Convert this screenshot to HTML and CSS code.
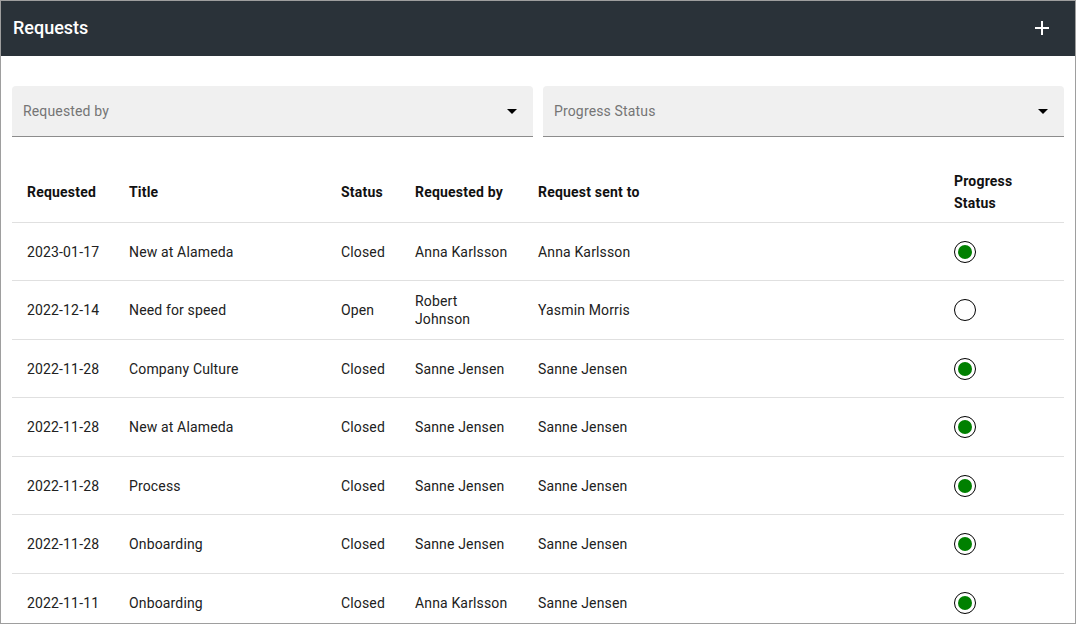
FILE: index.html
```html
<!DOCTYPE html>
<html>
<head>
<meta charset="utf-8">
<link rel="stylesheet" href="styles.css">
</head>
<body>
<div class="frame">
  <header class="topbar">
    <h1 class="title">Requests</h1>
    <svg class="add" width="14" height="14" viewBox="0 0 14 14"><path d="M7 0v14M0 7h14" stroke="#fff" stroke-width="2"/></svg>
  </header>
  <main class="content">
    <div class="filters">
      <div class="select"><span class="label">Requested by</span><span class="arrow"></span></div>
      <div class="select"><span class="label">Progress Status</span><span class="arrow"></span></div>
    </div>
    <table class="grid">
      <colgroup>
        <col style="width:102px"><col style="width:212px"><col style="width:74px"><col style="width:123px"><col style="width:416px"><col style="width:125px">
      </colgroup>
      <thead>
        <tr><th>Requested</th><th>Title</th><th>Status</th><th>Requested by</th><th>Request sent to</th><th>Progress<br>Status</th></tr>
      </thead>
      <tbody>
        <tr><td>2023-01-17</td><td>New at Alameda</td><td>Closed</td><td>Anna Karlsson</td><td>Anna Karlsson</td><td><span class="radio on"></span></td></tr>
        <tr><td>2022-12-14</td><td>Need for speed</td><td>Open</td><td class="wrap">Robert<br>Johnson</td><td>Yasmin Morris</td><td><span class="radio"></span></td></tr>
        <tr><td>2022-11-28</td><td>Company Culture</td><td>Closed</td><td>Sanne Jensen</td><td>Sanne Jensen</td><td><span class="radio on"></span></td></tr>
        <tr><td>2022-11-28</td><td>New at Alameda</td><td>Closed</td><td>Sanne Jensen</td><td>Sanne Jensen</td><td><span class="radio on"></span></td></tr>
        <tr><td>2022-11-28</td><td>Process</td><td>Closed</td><td>Sanne Jensen</td><td>Sanne Jensen</td><td><span class="radio on"></span></td></tr>
        <tr><td>2022-11-28</td><td>Onboarding</td><td>Closed</td><td>Sanne Jensen</td><td>Sanne Jensen</td><td><span class="radio on"></span></td></tr>
        <tr><td>2022-11-11</td><td>Onboarding</td><td>Closed</td><td>Anna Karlsson</td><td>Sanne Jensen</td><td><span class="radio on"></span></td></tr>
      </tbody>
    </table>
  </main>
</div>
</body>
</html>
```
FILE: styles.css
```css
html, body { margin: 0; padding: 0; }
body { font-family: Roboto, "Liberation Sans", sans-serif; color: #212121; background: #fff; }
.frame {
  width: 1076px; height: 624px; box-sizing: border-box;
  border: 1px solid #9e9e9e; overflow: hidden; background: #fff;
}
.topbar {
  height: 55px; background: #2a3239; display: flex; align-items: center;
  justify-content: space-between; padding: 0 26px 3px 12px; box-sizing: border-box;
}
.title { margin: 0; color: #fff; font-size: 18px; font-weight: 500; letter-spacing: 0; }
.add { display: block; margin-top: 2px; }
.content { padding: 30px 11px 0 11px; }
.filters { display: flex; gap: 10px; }
.select {
  flex: 1; height: 50px; background: #f0f0f0; border-bottom: 1px solid #8c8c8c;
  border-radius: 4px 4px 0 0; display: flex; align-items: center;
  justify-content: space-between; padding: 0 16px 0 11px;
}
.label { font-size: 14px; color: #757575; letter-spacing: 0.15px; }
.arrow { width: 0; height: 0; border-left: 5px solid transparent; border-right: 5px solid transparent; border-top: 5px solid #000; margin-top: 1px; }
.grid { width: 1052px; border-collapse: collapse; table-layout: fixed; margin-top: 24px; }
.grid th {
  text-align: left; font-size: 14px; font-weight: 700; color: #111; line-height: 22px;
  padding: 9px 15px 7px 15px; height: 44.5px; border-bottom: 1px solid #e0e0e0; vertical-align: middle;
  letter-spacing: 0.2px; white-space: nowrap;
}
.grid td {
  font-size: 14px; color: #212121; line-height: 18px; padding: 1px 15px 0 15px; height: 56.5px;
  border-bottom: 1px solid #e0e0e0; vertical-align: middle; letter-spacing: 0.15px; white-space: nowrap;
}
.radio {
  display: block; width: 20px; height: 20px; border: 1px solid #000; border-radius: 50%;
  position: relative; margin-left: 0; background: #fff;
}
.radio.on::after {
  content: ""; position: absolute; left: 3px; top: 3px; width: 14px; height: 14px;
  border-radius: 50%; background: #008000;
}
```
